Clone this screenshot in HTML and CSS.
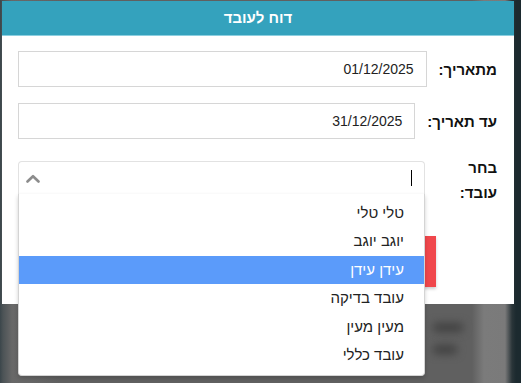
FILE: index.html
```html
<!DOCTYPE html>
<html lang="he">
<head>
<meta charset="utf-8">
<link rel="stylesheet" href="styles.css">
</head>
<body>
<div class="page">
  <div class="page-text"><span class="ghost g1"></span><span class="ghost g2"></span></div>
</div>
<div class="modal" dir="rtl">
  <div class="modal-header">דוח לעובד</div>
  <div class="modal-body">
    <div class="row">
      <label class="lbl">מתאריך:</label>
      <div class="input">01/12/2025</div>
    </div>
    <div class="row">
      <label class="lbl">עד תאריך:</label>
      <div class="input">31/12/2025</div>
    </div>
    <div class="row row-select">
      <label class="lbl lbl-wrap">בחר עובד:</label>
      <div class="select-wrap">
        <div class="select">
          <span class="cursor"></span>
          <svg class="chev" width="14" height="9" viewBox="0 0 14 9"><polyline points="1.5,7.5 7,2.2 12.5,7.5" fill="none" stroke="#8c8c8c" stroke-width="2.6" stroke-linecap="round" stroke-linejoin="round"/></svg>
        </div>
        <ul class="dropdown">
          <li>טלי טלי</li>
          <li>יוגב יוגב</li>
          <li class="active">עידן עידן</li>
          <li>עובד בדיקה</li>
          <li>מעין מעין</li>
          <li>עובד כללי</li>
        </ul>
      </div>
    </div>
    <div class="actions">
      <button class="btn-red" aria-label="הפק דוח"></button>
    </div>
  </div>
</div>
</body>
</html>
```
FILE: styles.css
```css
html, body {
  margin: 0;
  padding: 0;
}
body {
  width: 521px;
  height: 383px;
  overflow: hidden;
  position: relative;
  font-family: "Liberation Sans", "DejaVu Sans", Arial, sans-serif;
  background: linear-gradient(to right, #3b464b 0, #4c5356 3px, #686868 12px, #666 30px, #606060 60px, #606060 472px, #7b7b7b 484px, #7a7a7a 505px, #2a3539 512px, #1c2a2f 516px);
}
.page {
  height: 383px;
}
.page-text {
  padding: 323px 0 0 433px;
  display: flex;
  flex-direction: column;
  gap: 13px;
}
.ghost {
  display: block;
  height: 9px;
  background: #404040;
  border-radius: 4px;
  filter: blur(4px);
}
.g1 { width: 30px; }
.g2 { width: 24px; }

.modal {
  position: absolute;
  top: 1px;
  left: 2px;
  width: 512px;
  background: #fff;
}
.modal-header {
  height: 34px;
  line-height: 34px;
  background: #34a2bd;
  border-bottom: 1px solid #8ccfe0;
  color: #fff;
  font-weight: bold;
  font-size: 15px;
  text-align: center;
}
.modal-body {
  padding: 15px 17px 17px 16px;
}
.row {
  display: flex;
  align-items: center;
  gap: 12px;
  margin-bottom: 16px;
}
.lbl {
  font-size: 15px;
  font-weight: bold;
  color: #111;
  white-space: nowrap;
}
.input {
  flex: 1;
  height: 34px;
  line-height: 34px;
  border: 1px solid #d6d6d6;
  padding: 0 12px;
  font-size: 14px;
  color: #222;
  text-align: right;
}
.row-select {
  align-items: flex-start;
  margin-bottom: 0;
}
.lbl-wrap {
  white-space: normal;
  width: 60px;
  line-height: 25px;
}
.select-wrap {
  flex: 1;
  position: relative;
  margin-top: 6px;
}
.select {
  height: 32px;
  border: 1px solid #e2e2e2;
  border-bottom-color: #f0f0f0;
  border-radius: 4px 4px 0 0;
  display: flex;
  align-items: center;
  justify-content: space-between;
  padding: 0 12px 0 7px;
}
.cursor {
  display: block;
  width: 1px;
  height: 16px;
  background: #000;
}
.chev {
  display: block;
}
.dropdown {
  position: absolute;
  z-index: 2;
  top: 33px;
  left: 0;
  right: 0;
  margin: 0;
  padding: 5px 0 6px;
  list-style: none;
  background: #fff;
  border: 1px solid #d4d4d4;
  border-top: none;
  border-radius: 0 0 4px 4px;
  box-shadow: 0 2px 4px rgba(0,0,0,0.18);
}
.dropdown li {
  height: 28.4px;
  line-height: 28.4px;
  padding: 0 20px;
  font-size: 15px;
  color: #222;
}
.dropdown li.active {
  background: #5b9bfa;
  color: #fff;
}
.actions {
  display: flex;
  margin-top: 31px;
  padding-right: 61px;
}
.btn-red {
  width: 120px;
  height: 51px;
  border: none;
  background: #f0474c;
  box-shadow: 0 2px 3px rgba(0,0,0,0.2);
}
```
